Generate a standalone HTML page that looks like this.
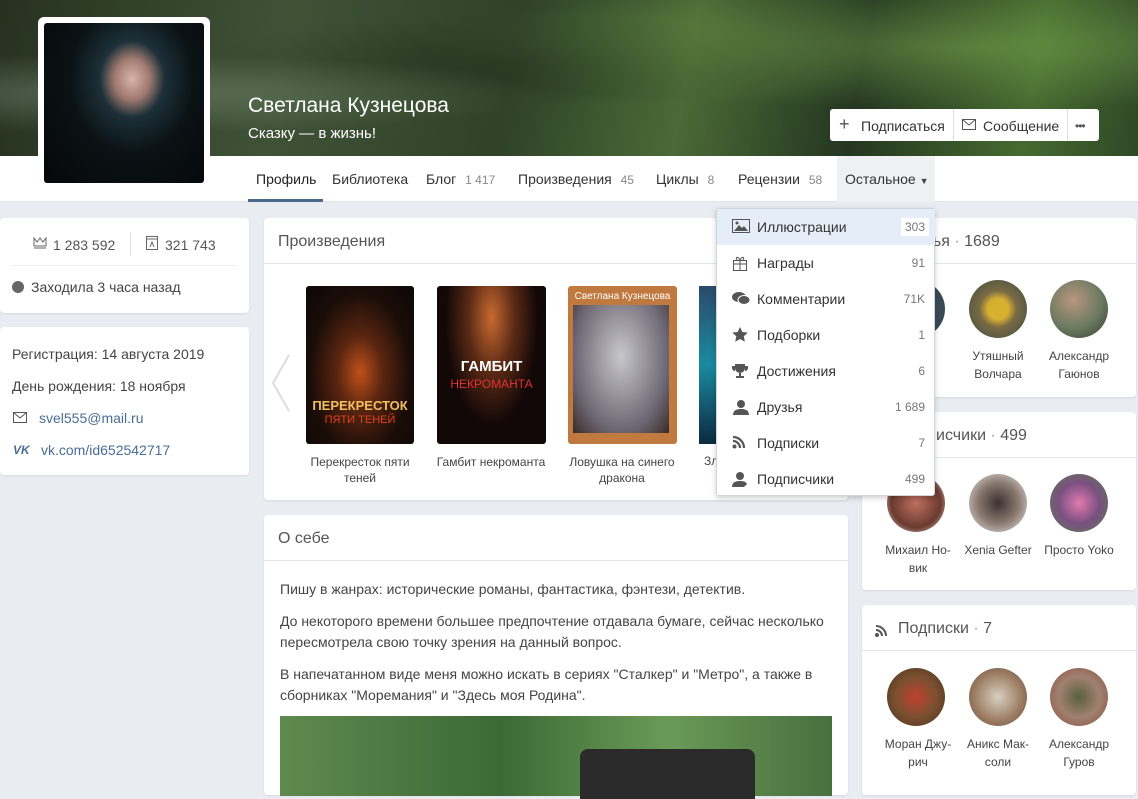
<!DOCTYPE html>
<html><head><meta charset="utf-8"><style>
*{box-sizing:border-box;margin:0;padding:0}
body{width:1138px;height:782px;overflow:hidden;background:#e9edf2;font-family:"Liberation Sans",sans-serif;color:#333;position:relative;font-size:14px}
.abs{position:absolute}
.card{position:absolute;background:#fff;border-radius:4px;box-shadow:0 1px 2px rgba(0,0,0,.08)}
.hdr{position:absolute;left:0;right:0;top:0;height:46px;border-bottom:1px solid #e3e6ea;padding:15px 14px;font-size:16px;color:#555}
.av{position:absolute;width:58px;height:58px;border-radius:50%}
.nm{position:absolute;width:80px;text-align:center;font-size:12px;line-height:18px;color:#444}
.mi{position:absolute;left:0;width:218px;height:36px;font-size:14px;color:#333}
.mi .t{position:absolute;left:40px;top:10px}
.mi .c{position:absolute;right:10px;top:11px;font-size:12px;color:#777}
.mi svg{position:absolute;left:15px;top:10px}
</style></head><body>
<div class="abs" style="left:0;top:0;width:1138px;height:156px;background:linear-gradient(100deg,#26321f 0%,#3f5236 25%,#2f4228 45%,#4a6a36 60%,#243620 75%,#466a30 90%,#2e4826 100%)"></div>
<div class="abs" style="left:0;top:0;width:1138px;height:156px;background:radial-gradient(ellipse at 85% 30%,rgba(140,190,90,.4),transparent 40%),radial-gradient(ellipse at 10% 60%,rgba(170,190,170,.3),transparent 30%),radial-gradient(ellipse at 45% 40%,rgba(20,30,20,.4),transparent 35%)"></div>
<div class="abs" style="left:0;top:156px;width:1138px;height:46px;background:#fff;border-bottom:1px solid #dfe3e8"></div>
<div class="abs" style="left:38px;top:17px;width:172px;height:171px;background:#fff;border-radius:6px"></div>
<div class="abs" style="left:44px;top:23px;width:160px;height:160px;background:radial-gradient(ellipse at 55% 35%,#d9b3a8 0%,#a07a70 14%,#1c3038 26%,#0b1215 50%,#050708 100%);border-radius:3px"></div>
<div class="abs" style="left:248px;top:94px;font-size:21px;color:#fff">Светлана Кузнецова</div>
<div class="abs" style="left:248px;top:125px;font-size:15px;color:#fff">Сказку — в жизнь!</div>
<div class="abs" style="left:830px;top:109px;width:269px;height:32px;background:#fff;border-radius:3px;font-size:14px;color:#333">
<div class="abs" style="left:9px;top:6px;font-size:18px;color:#555;line-height:18px">+</div>
<div class="abs" style="left:31px;top:9px">Подписаться</div>
<div class="abs" style="left:123px;top:0;width:1px;height:32px;background:#ddd"></div>
<svg class="abs" style="left:132px;top:10px" width="14" height="11"><rect x=".5" y=".5" width="13" height="10" fill="none" stroke="#555"/><path d="M1 1l6 5 6-5" fill="none" stroke="#555"/></svg>
<div class="abs" style="left:153px;top:9px">Сообщение</div>
<div class="abs" style="left:237px;top:0;width:1px;height:32px;background:#ddd"></div>
<div class="abs" style="left:245px;top:10px;font-size:12px;color:#555;letter-spacing:-1px">•••</div>
</div>
<div class="abs" style="left:256px;top:171px;font-size:14px;color:#222">Профиль</div>
<div class="abs" style="left:248px;top:199px;width:75px;height:3px;background:#4a6a8a"></div>
<div class="abs" style="left:332px;top:171px">Библиотека</div>
<div class="abs" style="left:426px;top:171px">Блог <span style="font-size:12px;color:#888;margin-left:5px">1 417</span></div>
<div class="abs" style="left:518px;top:171px">Произведения <span style="font-size:12px;color:#888;margin-left:5px">45</span></div>
<div class="abs" style="left:656px;top:171px">Циклы <span style="font-size:12px;color:#888;margin-left:5px">8</span></div>
<div class="abs" style="left:738px;top:171px">Рецензии <span style="font-size:12px;color:#888;margin-left:5px">58</span></div>
<div class="abs" style="left:837px;top:156px;width:98px;height:46px;background:#eef0f2"></div>
<div class="abs" style="left:845px;top:171px">Остальное <span style="font-size:9px;color:#444">▼</span></div>
<div class="card" style="left:0;top:218px;width:249px;height:95px">
<svg class="abs" style="left:33px;top:19px" width="14" height="12"><path d="M1 1l3 4 3-4 3 4 3-4v8H1zM1 11h12" fill="none" stroke="#666"/></svg>
<div class="abs" style="left:53px;top:19px;color:#555">1 283 592</div>
<div class="abs" style="left:130px;top:14px;width:1px;height:24px;background:#e3e3e3"></div>
<svg class="abs" style="left:146px;top:18px" width="12" height="14"><rect x=".5" y=".5" width="11" height="13" fill="none" stroke="#666"/><path d="M1 3h10M4 11l2-5 2 5" fill="none" stroke="#666"/></svg>
<div class="abs" style="left:165px;top:19px;color:#555">321 743</div>
<div class="abs" style="left:12px;top:47px;width:225px;height:1px;background:#eceef0"></div>
<div class="abs" style="left:12px;top:63px;width:12px;height:12px;border-radius:50%;background:#666"></div>
<div class="abs" style="left:31px;top:61px;color:#444">Заходила 3 часа назад</div>
</div>
<div class="card" style="left:0;top:327px;width:249px;height:148px;color:#444">
<div class="abs" style="left:12px;top:19px">Регистрация: 14 августа 2019</div>
<div class="abs" style="left:12px;top:51px">День рождения: 18 ноября</div>
<svg class="abs" style="left:13px;top:85px" width="14" height="11"><rect x=".5" y=".5" width="13" height="10" fill="none" stroke="#555"/><path d="M1 1l6 5 6-5" fill="none" stroke="#555"/></svg>
<div class="abs" style="left:39px;top:83px;color:#4a6d95">svel555@mail.ru</div>
<div class="abs" style="left:13px;top:116px;font-size:12px;font-weight:bold;color:#4a6d95;font-style:italic">VK</div>
<div class="abs" style="left:41px;top:115px;color:#4a6d95">vk.com/id652542717</div>
</div>
<div class="card" style="left:264px;top:218px;width:584px;height:282px">
<div class="hdr">Произведения</div>
<svg class="abs" style="left:5px;top:135px" width="22" height="60"><path d="M20 2L4 30l16 28" fill="none" stroke="#ddd" stroke-width="2"/></svg>
<div class="abs" style="left:42px;top:68px;width:108px;height:158px;border-radius:3px;background:radial-gradient(ellipse at 50% 55%,#c0511a 0%,#5a2510 30%,#1a0d08 65%,#0c0807 100%)"><div style="position:absolute;top:112px;width:100%;text-align:center;color:#f0c060;font-weight:bold;font-size:13px">ПЕРЕКРЕСТОК</div><div style="position:absolute;top:128px;width:100%;text-align:center;color:#e04020;font-size:11px">ПЯТИ ТЕНЕЙ</div></div>
<div class="abs" style="left:173px;top:68px;width:109px;height:158px;border-radius:3px;background:radial-gradient(ellipse at 50% 20%,#c86a30 0%,#5b2a15 30%,#120808 60%),#100808"><div style="position:absolute;top:72px;width:100%;text-align:center;color:#fff;font-weight:bold;font-size:15px">ГАМБИТ</div><div style="position:absolute;top:91px;width:100%;text-align:center;color:#e03030;font-size:12px">НЕКРОМАНТА</div></div>
<div class="abs" style="left:304px;top:68px;width:109px;height:158px;border-radius:3px;background:#c07a40;padding:5px"><div style="font-size:10px;color:#fff;text-align:center">Светлана Кузнецова</div><div style="width:96px;height:128px;margin-top:3px;background:radial-gradient(ellipse at 50% 40%,#c8c8cc,#6a6470 70%,#3a2a25)"></div></div>
<div class="abs" style="left:435px;top:68px;width:20px;height:158px;background:linear-gradient(#2a4a6a,#1a8aa0,#0c2a40)"></div>
<div class="abs" style="left:36px;top:236px;width:120px;text-align:center;font-size:12px;line-height:16px;color:#444">Перекресток пяти теней</div>
<div class="abs" style="left:167px;top:236px;width:120px;text-align:center;font-size:12px;line-height:16px;color:#444">Гамбит некроманта</div>
<div class="abs" style="left:298px;top:236px;width:120px;text-align:center;font-size:12px;line-height:16px;color:#444">Ловушка на синего дракона</div>
<div class="abs" style="left:440px;top:236px;font-size:12px;color:#444">Зл</div>
</div>
<div class="card" style="left:264px;top:515px;width:584px;height:280px">
<div class="hdr">О себе</div>
<div class="abs" style="left:16px;top:64px;width:560px;line-height:21px;color:#444;font-size:14px">
<p style="margin-bottom:11px">Пишу в жанрах: исторические романы, фантастика, фэнтези, детектив.</p>
<p style="margin-bottom:11px">До некоторого времени большее предпочтение отдавала бумаге, сейчас несколько пересмотрела свою точку зрения на данный вопрос.</p>
<p>В напечатанном виде меня можно искать в сериях "Сталкер" и "Метро", а также в сборниках "Моремания" и "Здесь моя Родина".</p>
</div>
<div class="abs" style="left:16px;top:201px;width:552px;height:80px;background:linear-gradient(90deg,#5e8a50,#3c6a35 40%,#6a9a58 70%,#486f3e)"></div>
<div class="abs" style="left:316px;top:234px;width:175px;height:50px;background:#2a2a2a;border-radius:8px 8px 0 0"></div>
</div>
<div class="card" style="left:862px;top:218px;width:274px;height:179px">
<div class="hdr" style="padding-left:36px">Друзья <span style="color:#999">·</span> 1689</div>
<div class="av" style="left:25px;top:62px;background:#3a4a55"></div>
<div class="av" style="left:107px;top:62px;background:radial-gradient(circle at 50% 50%,#d8b030 0 25%,#7a6a45 45%,#3c4a40)"></div>
<div class="av" style="left:188px;top:62px;background:radial-gradient(circle at 40% 35%,#b89680,#6a7a60 55%,#3a3a30)"></div>
<div class="nm" style="left:16px;top:129px">Зa-</div>
<div class="nm" style="left:96px;top:129px">Утяшный Волчара</div>
<div class="nm" style="left:177px;top:129px">Александр Гаюнов</div>
</div>
<div class="card" style="left:862px;top:412px;width:274px;height:178px">
<div class="hdr" style="padding-left:36px">Подписчики <span style="color:#999">·</span> 499</div>
<div class="av" style="left:25px;top:62px;background:radial-gradient(circle,#c07060,#6a3a30 60%,#f0e8e0)"></div>
<div class="av" style="left:107px;top:62px;background:radial-gradient(circle,#3a3030,#8a7a70 50%,#eee)"></div>
<div class="av" style="left:188px;top:62px;background:radial-gradient(circle,#e07ab0,#7a5080 50%,#5a8050)"></div>
<div class="nm" style="left:16px;top:129px">Михаил Но-вик</div>
<div class="nm" style="left:96px;top:129px">Xenia Gefter</div>
<div class="nm" style="left:177px;top:129px">Просто Yoko</div>
</div>
<div class="card" style="left:862px;top:605px;width:274px;height:190px">
<div class="hdr" style="padding-left:36px">Подписки <span style="color:#999">·</span> 7</div>
<svg class="abs" style="left:13px;top:19px" width="13" height="13"><circle cx="2" cy="11" r="2" fill="#555"/><path d="M1 6a6 6 0 016 6M1 2a10 10 0 0110 10" fill="none" stroke="#555" stroke-width="2"/></svg>
<div class="av" style="left:25px;top:63px;background:radial-gradient(circle,#c04030,#7a5030 50%,#4a3020)"></div>
<div class="av" style="left:107px;top:63px;background:radial-gradient(circle,#d8d0c0,#9a7a60 60%,#6a5040)"></div>
<div class="av" style="left:188px;top:63px;background:radial-gradient(circle,#5a6040,#a08070 50%,#8a5040)"></div>
<div class="nm" style="left:16px;top:130px">Моран Джу-рич</div>
<div class="nm" style="left:96px;top:130px">Аникс Мак-соли</div>
<div class="nm" style="left:177px;top:130px">Александр Гуров</div>
</div>
<div class="abs" style="left:716px;top:208px;width:219px;height:288px;background:#fff;border:1px solid #cfd5dc;border-radius:3px;box-shadow:0 2px 6px rgba(0,0,0,.2)">
<div class="mi" style="top:0;background:#e5eef8"><svg width="18" height="14"><rect x=".5" y=".5" width="17" height="13" fill="none" stroke="#555"/><path d="M2 12l5-6 3 3 2-2 4 5z" fill="#555"/><circle cx="5" cy="4" r="1.5" fill="#555"/></svg><span class="t">Иллюстрации</span><span class="c" style="background:#fff;padding:2px 4px;top:9px;right:6px">303</span></div>
<div class="mi" style="top:36px"><svg width="16" height="16"><rect x="1.5" y="5.5" width="13" height="10" fill="none" stroke="#555"/><path d="M8 5v11M1 9h14M8 5C6 1 3 2 5 5M8 5c2-4 5-3 3 0" fill="none" stroke="#555"/></svg><span class="t">Награды</span><span class="c">91</span></div>
<div class="mi" style="top:72px"><svg width="18" height="15"><ellipse cx="7" cy="6" rx="7" ry="5" fill="#555"/><ellipse cx="12" cy="9" rx="6" ry="4.5" fill="#555" stroke="#fff"/></svg><span class="t">Комментарии</span><span class="c">71K</span></div>
<div class="mi" style="top:108px"><svg width="16" height="16"><path d="M8 0l2.4 5 5.4.6-4 3.7 1.1 5.4L8 12l-4.8 2.7 1.1-5.4-4-3.7L5.6 5z" fill="#555"/></svg><span class="t">Подборки</span><span class="c">1</span></div>
<div class="mi" style="top:144px"><svg width="16" height="16"><path d="M3 1h10v4a5 5 0 01-10 0zM3 3H0v2a3 3 0 003 3M13 3h3v2a3 3 0 01-3 3M7 10h2v3h3v2H4v-2h3z" fill="#555"/></svg><span class="t">Достижения</span><span class="c">6</span></div>
<div class="mi" style="top:180px"><svg width="18" height="16"><circle cx="9" cy="5" r="4" fill="#555"/><path d="M1 16c0-5 4-6 8-6s8 1 8 6z" fill="#555"/></svg><span class="t">Друзья</span><span class="c">1 689</span></div>
<div class="mi" style="top:216px"><svg width="14" height="14"><circle cx="2.5" cy="11.5" r="2" fill="#555"/><path d="M1 6a7 7 0 017 7M1 2a11 11 0 0111 11" fill="none" stroke="#555" stroke-width="2.2"/></svg><span class="t">Подписки</span><span class="c">7</span></div>
<div class="mi" style="top:252px"><svg width="18" height="16"><circle cx="8" cy="5" r="4" fill="#555"/><path d="M0 16c0-5 4-6 8-6s6 1 7 3l-3 3z" fill="#555"/></svg><span class="t">Подписчики</span><span class="c">499</span></div>
</div>
</body></html>
